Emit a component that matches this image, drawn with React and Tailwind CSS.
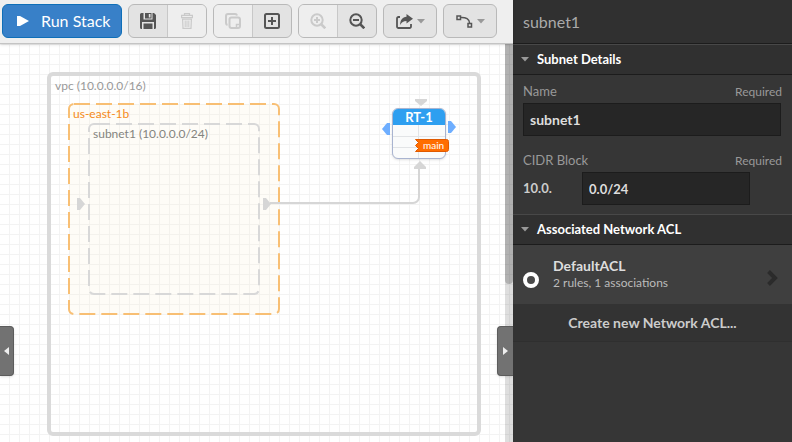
import React from "react";

function Caret({ className }) {
  return (
    <svg width="8" height="5" viewBox="0 0 8 5" className={className} aria-hidden="true">
      <path d="M0 0h8L4 4.5z" fill="currentColor" />
    </svg>
  );
}

function ToolGroup({ children, label }) {
  return (
    <div
      role="group"
      aria-label={label}
      className="flex h-[34px] shrink-0 divide-x divide-[#c8c8c8] overflow-hidden rounded-md border border-[#b9b9b9] bg-[#e3e3e3]"
    >
      {children}
    </div>
  );
}

function ToolButton({ label, disabled, children }) {
  return (
    <button
      type="button"
      aria-label={label}
      disabled={disabled}
      className="flex w-[39px] items-center justify-center text-[#555] last:w-[38px] disabled:bg-[#eeeeee] disabled:text-[#cacaca]"
    >
      {children}
    </button>
  );
}

function MenuButton({ label, children }) {
  return (
    <button type="button" aria-label={label} className="flex w-[52px] items-center justify-center gap-1 text-[#555]">
      {children}
      <Caret className="text-[#999]" />
    </button>
  );
}

function SaveIcon() {
  return (
    <svg width="16" height="16" viewBox="0 0 16 16" fill="currentColor" aria-hidden="true">
      <path d="M1.5 0H3.5V6.5H12.5V0H14L16 2V14.5A1.5 1.5 0 0 1 14.5 16H14V9H2V16H1.5A1.5 1.5 0 0 1 0 14.5V1.5A1.5 1.5 0 0 1 1.5 0z" />
      <path fillRule="evenodd" d="M5 0h6.5v5.5H5zM8.8 1v3.5h1.7V1z" />
      <path d="M3.5 10.5h9V16h-9z" />
    </svg>
  );
}

function TrashIcon() {
  return (
    <svg width="12" height="16" viewBox="0 0 12 16" fill="none" stroke="currentColor" strokeWidth="1.2" aria-hidden="true">
      <path d="M3.5 2V.6h5V2" />
      <path d="M.6 4.6V2.4h10.800v2.200z" />
      <path d="M1.600 6.200l.4 9.200h8l.4-9.200z" />
      <path d="M4.200 7.500v6.500M6 7.500v6.500M7.800 7.500v6.500" strokeWidth="1" />
    </svg>
  );
}

function CloneIcon() {
  return (
    <svg width="16" height="16" viewBox="0 0 16 16" fill="none" stroke="currentColor" aria-hidden="true">
      <path d="M2.500 12A2 2 0 0 1 1 10V3a2 2 0 0 1 2-2h7a2 2 0 0 1 2 1.500" strokeWidth="2" />
      <rect x="4.500" y="4.500" width="10.500" height="10.500" rx="2" strokeWidth="2" />
      <path d="M11.500 14v-2.500H14" strokeWidth="1.500" />
    </svg>
  );
}

function PlusBoxIcon() {
  return (
    <svg width="16" height="16" viewBox="0 0 16 16" fill="none" stroke="currentColor" strokeWidth="2" aria-hidden="true">
      <rect x="1" y="1" width="14" height="14" rx="1.5" />
      <path d="M8 4v8M4 8h8" />
    </svg>
  );
}

function ZoomIcon({ plus }) {
  return (
    <svg width="16" height="16" viewBox="0 0 16 16" fill="none" stroke="currentColor" strokeWidth="2" aria-hidden="true">
      <circle cx="7" cy="7" r="5.7" />
      <path d="M11 11l4.3 4.3" strokeWidth="2.6" />
      <path d={plus ? "M7 4v6M4 7h6" : "M4 7h6"} />
    </svg>
  );
}

function ExportIcon() {
  return (
    <svg width="17" height="15" viewBox="0 0 17 15" fill="none" aria-hidden="true">
      <path d="M4 3H2.5A1.5 1.5 0 0 0 1 4.5v8A1.5 1.5 0 0 0 2.5 14h11a1.5 1.5 0 0 0 1.5-1.5V10" stroke="currentColor" strokeWidth="1.8" />
      <path d="M10.5 0L17 4.8l-6.5 4.7V7C7.5 7 5.5 8.3 4.2 11 4 6 6.5 3 10.5 2.7z" fill="currentColor" />
    </svg>
  );
}

function CurveIcon() {
  return (
    <svg width="17" height="13" viewBox="0 0 17 13" fill="none" stroke="currentColor" strokeWidth="1.5" aria-hidden="true">
      <rect x="1" y="1" width="3.5" height="3.5" />
      <rect x="12" y="8.5" width="3.5" height="3.5" />
      <path d="M4.5 2.5C10 2.2 13.500 4 13.700 8.500" />
    </svg>
  );
}

function Toolbar() {
  return (
    <header className="relative z-10 flex h-11 shrink-0 items-start gap-1.5 border-b border-[#c4c4c4] bg-[#efefef] px-0.5 pt-1 shadow-sm">
      <button
        type="button"
        className="flex h-[34px] w-[120px] shrink-0 items-center gap-3 rounded-md border border-[#0f6fb8] bg-[#3880c8] pl-3.5 text-base text-white"
      >
        <svg width="12" height="10" viewBox="0 0 12 10" aria-hidden="true">
          <path d="M0 0h3l9 5-9 5H0z" fill="#fff" />
        </svg>
        Run Stack
      </button>
      <ToolGroup label="File">
        <ToolButton label="Save">
          <SaveIcon />
        </ToolButton>
        <ToolButton label="Delete" disabled>
          <TrashIcon />
        </ToolButton>
      </ToolGroup>
      <ToolGroup label="Create">
        <ToolButton label="Duplicate" disabled>
          <CloneIcon />
        </ToolButton>
        <ToolButton label="New stack">
          <PlusBoxIcon />
        </ToolButton>
      </ToolGroup>
      <ToolGroup label="Zoom">
        <ToolButton label="Zoom in" disabled>
          <ZoomIcon plus />
        </ToolButton>
        <ToolButton label="Zoom out">
          <ZoomIcon />
        </ToolButton>
      </ToolGroup>
      <ToolGroup label="Export">
        <MenuButton label="Export">
          <ExportIcon />
        </MenuButton>
      </ToolGroup>
      <ToolGroup label="Line style">
        <MenuButton label="Line style">
          <CurveIcon />
        </MenuButton>
      </ToolGroup>
    </header>
  );
}

function RouteTable() {
  return (
    <div className="absolute top-16 left-[392px] h-[51px] w-[54px] rounded-md border border-[#a9b4d0] bg-[#fafbfb] shadow-sm">
      <div className="h-4 rounded-t-[5px] bg-[#2e9ff0] text-center text-[13px] leading-4 font-bold text-white">RT-1</div>
      <div className="grid grid-cols-2">
        <div className="h-3 border-r border-b border-[#e2e4e6]" />
        <div className="h-3 border-b border-[#e2e4e6]" />
        <div className="h-[11px] border-r border-b border-[#e2e4e6]" />
        <div className="h-[11px] border-b border-[#e2e4e6]" />
        <div className="h-2.5 border-r border-[#e2e4e6]" />
      </div>
      <svg className="absolute top-[30px] left-[22px]" width="34" height="13" viewBox="0 0 34 13" aria-hidden="true">
        <path d="M.5.5h31a2 2 0 0 1 2 2v8a2 2 0 0 1-2 2H.5L3.500 9.500.5 6.500 3.500 3.500z" fill="#ff6d00" stroke="#e05a00" />
      </svg>
      <span className="absolute top-[30px] left-[30px] text-[10px] leading-3 text-white">main</span>
    </div>
  );
}

function PanelHandle({ side }) {
  const left = side === "left";
  return (
    <button
      type="button"
      aria-label={left ? "Toggle resource panel" : "Toggle property panel"}
      className={
        "absolute top-[282px] z-10 flex h-[50px] items-center justify-center border border-[#5c5c5c] bg-[#727272] shadow " +
        (left ? "left-0 w-3.5 rounded-r border-l-0" : "right-0 w-4 rounded-l border-r-0")
      }
    >
      <svg width="5" height="8" viewBox="0 0 5 8" aria-hidden="true">
        <path d={left ? "M5 0v8L0 4z" : "M0 0v8l5-4z"} fill="#eee" />
      </svg>
    </button>
  );
}

function Canvas() {
  return (
    <section
      aria-label="Canvas"
      className="relative flex-1 overflow-hidden bg-white bg-[linear-gradient(to_right,#f3f3f3_1px,transparent_1px),linear-gradient(to_bottom,#f3f3f3_1px,transparent_1px)] bg-size-[10px_10px] bg-position-[9px_0px]"
    >
      <svg className="absolute top-0 left-0" width="505" height="398" fill="none" aria-hidden="true">
        <rect x="49" y="30" width="430" height="360" rx="4" stroke="#dadada" strokeWidth="4" />
        <rect x="69" y="60" width="210" height="210" rx="5" stroke="#f8bf74" strokeWidth="2" strokeDasharray="16 6" fill="#fbf0d8" fillOpacity="0.2" />
        <rect x="89" y="80" width="170" height="170" rx="5" stroke="#d8d8d8" strokeWidth="2" strokeDasharray="16 6" />
        <path d="M270 159H413a6 6 0 0 0 6-6V124" stroke="#d6d6d6" strokeWidth="2" />
        <g fill="#d6d6d6">
          <path d="M77 154h3l5 6-5 6h-3z" />
          <path d="M263 154h3l5 6-5 6h-3z" />
          <path d="M415 55h12v2l-6 5-6-5z" />
          <path d="M414 125v-2l6-6 6 6v2z" />
        </g>
        <g fill="#6eaeff">
          <path d="M390 79v12h-3l-5-6 5-6z" />
          <path d="M448 77v12h3l5-6-5-6z" />
        </g>
      </svg>
      <span className="absolute top-[34px] left-[55px] text-xs leading-4 text-[#999]">vpc (10.0.0.0/16)</span>
      <span className="absolute top-[62px] left-[73px] text-xs leading-4 text-[#f58a20]">us-east-1b</span>
      <span className="absolute top-[82px] left-[93px] text-xs leading-4 text-[#84847f]">subnet1 (10.0.0.0/24)</span>
      <RouteTable />
      <div className="absolute inset-y-0 right-0 w-2 bg-black/13">
        <div className="h-60 rounded-b bg-black/20" />
      </div>
      <PanelHandle side="left" />
      <PanelHandle side="right" />
    </section>
  );
}

function SectionHeader({ children }) {
  return (
    <h2 className="border-t border-b border-t-[#484848] border-b-[#1c1c1c] bg-[#303030]">
      <button type="button" className="flex h-[29px] w-full items-center gap-2 pl-2 text-[13px] font-bold text-white">
        <Caret className="text-[#999]" />
        {children}
      </button>
    </h2>
  );
}

function Field({ id, label, children }) {
  return (
    <div>
      <div className="flex items-end justify-between pb-[3px]">
        <label htmlFor={id} className="text-[13px] leading-[18px] text-[#999]">
          {label}
        </label>
        <span className="text-xs leading-4 text-[#999]">Required</span>
      </div>
      {children}
    </div>
  );
}

function PropertyPanel() {
  return (
    <aside className="flex w-[279px] shrink-0 flex-col bg-[#363636]">
      <h1 className="flex h-11 items-center border-b border-[#1c1c1c] bg-[#303030] pl-2.5 text-base text-[#aaa]">subnet1</h1>
      <SectionHeader>Subnet Details</SectionHeader>
      <div className="flex flex-col gap-[15px] px-2.5 pt-[7px] pb-[9px]">
        <Field id="subnet-name" label="Name">
          <input
            id="subnet-name"
            defaultValue="subnet1"
            className="block h-[33px] w-[258px] border border-[#1c1c1c] bg-[#262626] px-1.5 text-sm font-bold text-[#ddd]"
          />
        </Field>
        <Field id="cidr-block" label="CIDR Block">
          <div className="flex items-center">
            <span className="w-[59px] text-[13px] font-bold text-[#ccc]">10.0.</span>
            <input
              id="cidr-block"
              defaultValue="0.0/24"
              className="block h-[33px] w-[168px] border border-[#1c1c1c] bg-[#262626] px-1.5 text-[13px] font-bold text-[#ddd]"
            />
          </div>
        </Field>
      </div>
      <SectionHeader>Associated Network ACL</SectionHeader>
      <div className="flex h-[59px] items-center bg-[#3f3f3f] pr-3.5 pl-2.5">
        <input
          type="radio"
          name="acl"
          id="default-acl"
          defaultChecked
          className="mt-2.5 size-4 appearance-none rounded-full border-4 border-white bg-[#4a4a4a]"
        />
        <label htmlFor="default-acl" className="flex flex-1 flex-col pb-0.5 pl-3.5">
          <span className="text-sm leading-[18px] font-bold text-[#ddd]">DefaultACL</span>
          <span className="text-xs leading-4 text-[#bbb]">2 rules, 1 associations</span>
        </label>
        <button type="button" aria-label="Open DefaultACL" className="pt-1.5">
          <svg width="11" height="16" viewBox="0 0 11 16" fill="none" aria-hidden="true">
            <path d="M1.5 1.5L8 8l-6.500 6.500" stroke="#2b2b2b" strokeWidth="4" />
          </svg>
        </button>
      </div>
      <button type="button" className="h-[38px] border-b border-[#2f2f2f] bg-[#333] text-sm font-bold text-[#ccc]">
        Create new Network ACL...
      </button>
    </aside>
  );
}

export default function App() {
  return (
    <div className="flex h-screen overflow-hidden font-[Lato,sans-serif]">
      <main className="flex min-w-0 flex-1 flex-col">
        <Toolbar />
        <Canvas />
      </main>
      <PropertyPanel />
    </div>
  );
}
